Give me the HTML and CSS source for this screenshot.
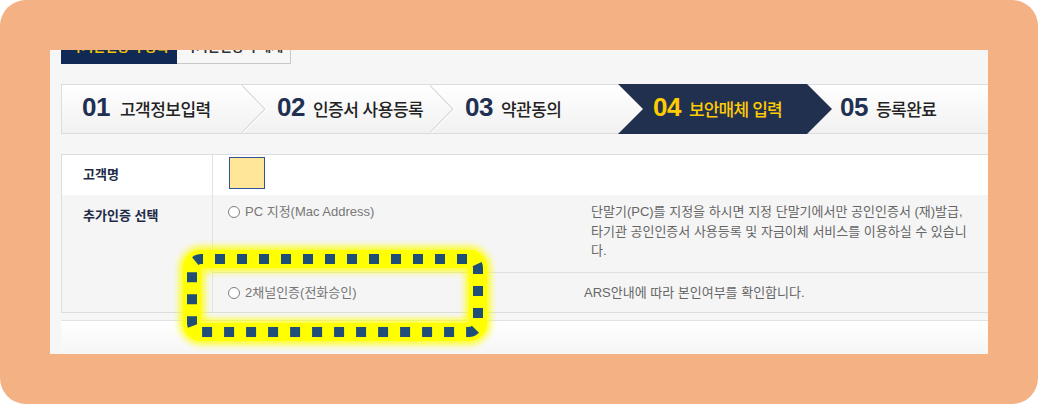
FILE: index.html
```html
<!DOCTYPE html>
<html lang="ko">
<head>
<meta charset="utf-8">
<title>보안매체 입력</title>
<link rel="stylesheet" href="styles.css">
</head>
<body>
<div class="frame">
  <div class="shot">
    <div class="tabs">
      <div class="tab on">타기관인증서 등록</div>
      <div class="tab">타기관인증서 해제</div>
    </div>

    <div class="steps">
      <div class="step s1"><div class="lbl"><b>01</b><span>고객정보입력</span></div></div>
      <svg class="chev" viewBox="0 0 25 48" width="25" height="48"><polyline points="0.5,0 24,24 0.5,48" fill="none" stroke="#ffffff" stroke-width="2"/><polyline points="-0.5,0 23,24 -0.5,48" fill="none" stroke="#d9d9d9" stroke-width="1.2"/></svg>
      <div class="step s2"><div class="lbl"><b>02</b><span>인증서 사용등록</span></div></div>
      <svg class="chev" viewBox="0 0 25 48" width="25" height="48"><polyline points="0.5,0 24,24 0.5,48" fill="none" stroke="#ffffff" stroke-width="2"/><polyline points="-0.5,0 23,24 -0.5,48" fill="none" stroke="#d9d9d9" stroke-width="1.2"/></svg>
      <div class="step s3"><div class="lbl"><b>03</b><span>약관동의</span></div></div>
      <div class="step s4"><div class="lbl"><b>04</b><span>보안매체 입력</span></div></div>
      <div class="step s5"><div class="lbl"><b>05</b><span>등록완료</span></div></div>
    </div>

    <div class="form">
      <div class="row r1">
        <div class="th">고객명</div>
        <div class="td"><span class="inp"></span></div>
      </div>
      <div class="row r2">
        <div class="th th2">추가인증 선택</div>
        <div class="td opts">
          <div class="opt o1">
            <div class="olabel"><i class="rb"></i>PC 지정(Mac Address)</div>
            <p class="desc">단말기(PC)를 지정을 하시면 지정 단말기에서만 공인인증서 (재)발급,<br>타기관 공인인증서 사용등록 및 자금이체 서비스를 이용하실 수 있습니<br>다.</p>
          </div>
          <div class="opt o2">
            <div class="olabel"><i class="rb"></i>2채널인증(전화승인)</div>
            <p class="desc">ARS안내에 따라 본인여부를 확인합니다.</p>
          </div>
        </div>
      </div>
    </div>

    <div class="foot"></div>

    <svg class="mark" width="340" height="120" viewBox="0 0 340 120">
      <defs>
        <filter id="glow" x="-20%" y="-40%" width="140%" height="180%">
          <feGaussianBlur stdDeviation="3"/>
        </filter>
      </defs>
      <rect x="22" y="19" width="286" height="73" rx="9" fill="none" stroke="#ffff00" stroke-width="26" filter="url(#glow)" opacity="0.8"/>
      <rect x="22" y="19" width="286" height="73" rx="9" fill="none" stroke="#ffff00" stroke-width="18"/>
      <rect x="22" y="19" width="286" height="73" rx="9" fill="none" stroke="#1f4e79" stroke-width="10" stroke-dasharray="10 12" stroke-dashoffset="8"/>
    </svg>
  </div>
</div>
</body>
</html>
```

FILE: styles.css
```css
html, body {
  margin: 0;
  padding: 0;
  background: #ffffff;
}

.frame {
  width: 1038px;
  height: 404px;
  box-sizing: border-box;
  padding: 50px;
  background: #f4b183;
  border-radius: 26px;
}

.shot {
  position: relative;
  width: 938px;
  height: 304px;
  overflow: hidden;
  background: #f6f6f6;
  padding-left: 11px;
  box-sizing: border-box;
  font-family: "Liberation Sans", "Noto Sans CJK KR", sans-serif;
}

/* tabs (cut off at top) */
.tabs {
  display: flex;
  margin-top: -16px;
  height: 30px;
}
.tab {
  box-sizing: border-box;
  height: 30px;
  width: 114px;
  display: flex;
  align-items: center;
  justify-content: center;
  padding-bottom: 7px;
  font-size: 13px;
  font-weight: bold;
  color: #333;
  background: #f7f7f7;
  border: 1px solid #c9c9c9;
  border-left: none;
}
.tab.on {
  width: 116px;
  background: #112a55;
  color: #f3c300;
  border: none;
}

/* steps */
.steps {
  margin-top: 20px;
  width: 960px;
  height: 50px;
  box-sizing: border-box;
  border: 1px solid #dcdcdc;
  background: linear-gradient(#ffffff, #f1f1f1);
  display: flex;
}
.step {
  display: flex;
  align-items: center;
  box-sizing: border-box;
  flex: none;
}
.lbl {
  white-space: nowrap;
  line-height: 26px;
}
.lbl b {
  font-family: "Liberation Sans", Arial, sans-serif;
  font-size: 26px;
  font-weight: bold;
  color: #1f3052;
  letter-spacing: -0.5px;
}
.lbl span {
  font-family: "Noto Sans CJK KR", sans-serif;
  font-size: 17px;
  font-weight: 500;
  color: #222;
  margin-left: 8px;
  letter-spacing: -0.5px;
}
.chev {
  flex: none;
  display: block;
}
.s1 { width: 180px; padding-left: 20px; }
.s1 .lbl span { margin-left: 10px; }
.s2 { width: 163px; padding-left: 10px; }
.s3 { width: 163px; padding-left: 10px; }
.s4 {
  width: 214px;
  padding-left: 35px;
  margin: -1px 0;
  background: #22304f;
  clip-path: polygon(0 0, calc(100% - 25px) 0, 100% 50%, calc(100% - 25px) 100%, 0 100%, 25px 50%);
}
.s4 .lbl b, .s4 .lbl span { color: #ffcc00; }
.s4 .lbl span { letter-spacing: -0.8px; }
.s5 { padding-left: 8px; }

/* form table */
.form {
  margin-top: 20px;
  width: 960px;
  border-top: 1px solid #dddddd;
  border-left: 1px solid #dddddd;
  border-bottom: 1px solid #dddddd;
}
.row {
  display: grid;
  grid-template-columns: 151px 1fr;
}
.r1 {
  height: 40px;
  background: #ffffff;
}
.r2 {
  background: #f5f5f5;
}
.th {
  box-sizing: border-box;
  border-right: 1px solid #e2e2e2;
  padding-left: 21px;
  display: flex;
  align-items: center;
  font-family: "Noto Sans CJK KR", sans-serif;
  font-size: 13px;
  font-weight: bold;
  color: #1e2b48;
  padding-bottom: 3px;
}
.th2 {
  align-items: flex-start;
  padding-top: 10px;
  line-height: 20px;
  padding-bottom: 0;
}
.td {
  display: flex;
  align-items: center;
  padding-left: 16px;
}
.inp {
  display: block;
  width: 36px;
  height: 32px;
  box-sizing: border-box;
  background: #ffe699;
  border: 1px solid #2f5597;
  margin-top: 2px;
  margin-bottom: 6px;
}
.opts {
  display: block;
  padding-left: 0;
}
.opt {
  display: flex;
  font-size: 13px;
  line-height: 20px;
}
.o1 {
  height: 78px;
  box-sizing: border-box;
  padding: 7px 0 10px;
  border-bottom: 1px solid #e0e0e0;
  align-items: flex-start;
}
.o2 {
  height: 39px;
  align-items: center;
}
.olabel {
  width: 371px;
  box-sizing: border-box;
  padding-left: 15px;
  display: flex;
  align-items: center;
  color: #777;
  font-size: 13px;
  white-space: nowrap;
}
.rb {
  display: inline-block;
  width: 12px;
  height: 12px;
  box-sizing: border-box;
  border: 1.3px solid #7f7f7f;
  border-radius: 50%;
  background: #ffffff;
  margin-right: 5px;
}
.desc {
  margin: 0;
  font-size: 13px;
  color: #666;
  white-space: nowrap;
  line-height: 20px;
}
.o1 .desc {
  padding-left: 7px;
  line-height: 19.5px;
}

/* bottom box */
.foot {
  margin-top: 7px;
  width: 960px;
  height: 60px;
  border-top: 1px solid #e2e2e2;
  background: linear-gradient(#ffffff, #eeeeee);
}

/* highlight overlay */
.mark {
  position: absolute;
  left: 120px;
  top: 190px;
  display: block;
  pointer-events: none;
}
```
